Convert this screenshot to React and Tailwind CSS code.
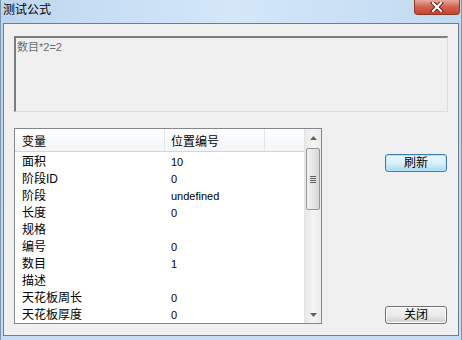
import React from "react";

const rows = [
  ["面积", "10"],
  ["阶段ID", "0"],
  ["阶段", "undefined"],
  ["长度", "0"],
  ["规格", ""],
  ["编号", "0"],
  ["数目", "1"],
  ["描述", ""],
  ["天花板周长", "0"],
  ["天花板厚度", "0"],
];

const font = { fontFamily: '"Liberation Sans", "Noto Sans CJK SC", sans-serif' };

export default function App() {
  return (
    <div
      className="w-[462px] h-[340px] flex flex-col overflow-hidden bg-gradient-to-b from-[#bcd6f0] to-[#c6dcf2] border-l border-r border-[#7c95b1]"
      style={font}
    >
      {/* title bar */}
      <div className="h-[23px] flex items-start bg-gradient-to-r from-[#bdd6ef] via-[#d4e7f9] to-[#c1d9f1]">
        <div className="pl-[2px] pt-[3px] text-[12px] leading-[15px] text-black">测试公式</div>
        <div className="flex-1" />
        <div className="mr-[1px] w-[46px] h-[15px] rounded-b-[4px] border border-t-0 border-[#8d3a2d] bg-gradient-to-b from-[#e8a89c] via-[#d2614d] to-[#c9412b] flex items-center justify-center">
          <svg width="14" height="10" viewBox="0 0 14 10">
            <path d="M3 1 L11 9 M11 1 L3 9" stroke="#5a1b12" strokeWidth="4" strokeLinecap="square" />
            <path d="M3 1 L11 9 M11 1 L3 9" stroke="#ffffff" strokeWidth="2.2" strokeLinecap="square" />
          </svg>
        </div>
      </div>

      {/* client area */}
      <div className="mx-[2px] mb-[4px] flex-1 border border-[#6f7e8f] bg-[#f0f0f0] flex flex-col pl-[10px] pr-[10px] pt-[12px]">
        {/* formula box */}
        <div className="w-[434px] h-[76px] border-t-2 border-l-2 border-t-[#7d7d7d] border-l-[#7d7d7d] border-b border-r border-b-[#dcdcdc] border-r-[#dcdcdc] bg-[#f0f0f0] px-[1px] pt-[2px] text-[11px] leading-[14px] text-[#6d6d6d]">
          数目*2=2
        </div>

        <div className="mt-[16px] flex">
          {/* list view */}
          <div className="w-[308px] h-[196px] border border-[#828790] bg-white flex">
            <div className="flex-1 flex flex-col">
              <div className="h-[23px] flex border-b border-[#d5d5d5] bg-gradient-to-b from-white to-[#f3f4f6]">
                <div className="w-[150px] border-r border-[#e3e5e8] pl-[7px] pt-[4px] text-[12px] leading-[19px] text-black">变量</div>
                <div className="w-[100px] border-r border-[#e3e5e8] pl-[6px] pt-[4px] text-[12px] leading-[19px] text-black">位置编号</div>
                <div className="flex-1" />
              </div>
              {rows.map(([a, b]) => (
                <div key={a} className="h-[17px] flex text-black pt-[3px]">
                  <div className="w-[150px] pl-[7px] text-[12px] leading-[14px]">{a}</div>
                  <div className="w-[100px] pl-[6px] text-[11px] leading-[14px]">{b}</div>
                </div>
              ))}
            </div>
            {/* scrollbar */}
            <div className="w-[17px] bg-gradient-to-r from-[#e8e8e8] via-[#f4f4f4] to-[#eaeaea] border-l border-[#e4e4e4] flex flex-col">
              <div className="h-[17px] flex items-center justify-center">
                <svg width="7" height="4" viewBox="0 0 7 4"><path d="M3.5 0 L7 4 L0 4 Z" fill="#606060" /></svg>
              </div>
              <div className="mx-[1px] mt-[2px] h-[62px] rounded-[2px] border border-[#979797] bg-gradient-to-r from-[#f2f2f2] via-[#e6e6e6] to-[#d6d6d6] flex flex-col items-center justify-center gap-[1px]">
                <div className="w-[6px] h-[1px] bg-[#5e5e5e]" />
                <div className="w-[6px] h-[1px] bg-[#5e5e5e]" />
                <div className="w-[6px] h-[1px] bg-[#5e5e5e]" />
                <div className="w-[6px] h-[1px] bg-[#5e5e5e]" />
              </div>
              <div className="flex-1" />
              <div className="h-[17px] flex items-center justify-center">
                <svg width="7" height="4" viewBox="0 0 7 4"><path d="M0 0 L7 0 L3.5 4 Z" fill="#606060" /></svg>
              </div>
            </div>
          </div>

          {/* buttons */}
          <div className="ml-[63px] h-[196px] flex flex-col justify-between pt-[26px]">
            <button className="w-[62px] h-[18px] rounded-[3px] border border-[#3c7fb1] bg-gradient-to-b from-[#eaf6fd] via-[#d9f0fc] to-[#a7d9f5] text-[12px] leading-[14px] text-black shadow-[inset_0_0_0_1px_#b6e3f8]">
              刷新
            </button>
            <button className="w-[62px] h-[18px] rounded-[3px] border border-[#707070] bg-gradient-to-b from-[#f2f2f2] via-[#ebebeb] to-[#cfcfcf] text-[12px] leading-[14px] text-black shadow-[inset_0_0_0_1px_#fcfcfc]">
              关闭
            </button>
          </div>
        </div>
      </div>
    </div>
  );
}
